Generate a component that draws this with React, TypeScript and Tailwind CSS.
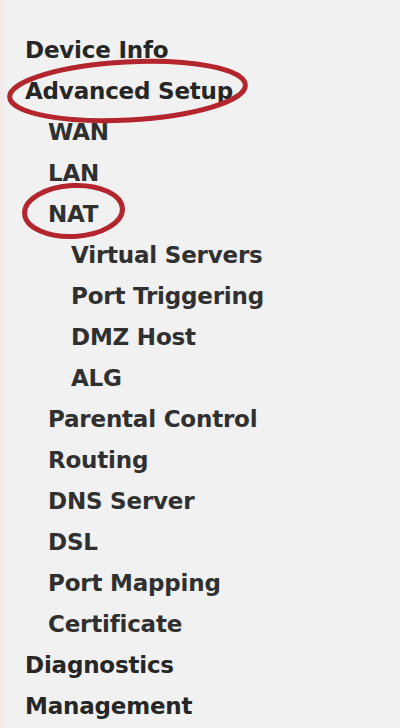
import React from "react";

type Item = { label: string; level: 0 | 1 | 2 };

const items: Item[] = [
  { label: "Device Info", level: 0 },
  { label: "Advanced Setup", level: 0 },
  { label: "WAN", level: 1 },
  { label: "LAN", level: 1 },
  { label: "NAT", level: 1 },
  { label: "Virtual Servers", level: 2 },
  { label: "Port Triggering", level: 2 },
  { label: "DMZ Host", level: 2 },
  { label: "ALG", level: 2 },
  { label: "Parental Control", level: 1 },
  { label: "Routing", level: 1 },
  { label: "DNS Server", level: 1 },
  { label: "DSL", level: 1 },
  { label: "Port Mapping", level: 1 },
  { label: "Certificate", level: 1 },
  { label: "Diagnostics", level: 0 },
  { label: "Management", level: 0 },
];

const indent: Record<number, string> = {
  0: "pl-[25px] text-[#262626]",
  1: "pl-[48px] text-[#303030]",
  2: "pl-[71px] text-[#303030]",
};

export default function App() {
  return (
    <div className="relative w-[400px] h-[728px] overflow-hidden bg-[#f1f1f1] flex">
      <div className="w-[4px] h-full bg-[#f7eaea]" />
      <ul
        className="flex flex-col pt-[30px] -ml-[4px] font-bold text-[23px] leading-[41px] tracking-[-0.2px]"
        style={{ fontFamily: '"DejaVu Sans", Verdana, sans-serif' }}
      >
        {items.map((it) => (
          <li key={it.label} className={`${indent[it.level]} whitespace-nowrap`}>
            {it.label}
          </li>
        ))}
      </ul>
      <svg
        className="absolute left-0 top-0 pointer-events-none"
        width="400"
        height="728"
        viewBox="0 0 400 728"
      >
        <ellipse
          cx="127.5"
          cy="91"
          rx="118"
          ry="29"
          transform="rotate(-3 127.5 91)"
          fill="none"
          stroke="#b3262e"
          strokeWidth="5"
        />
        <ellipse
          cx="73.5"
          cy="211"
          rx="49"
          ry="25.5"
          transform="rotate(-3 73.5 211)"
          fill="none"
          stroke="#b3262e"
          strokeWidth="5"
        />
      </svg>
    </div>
  );
}
